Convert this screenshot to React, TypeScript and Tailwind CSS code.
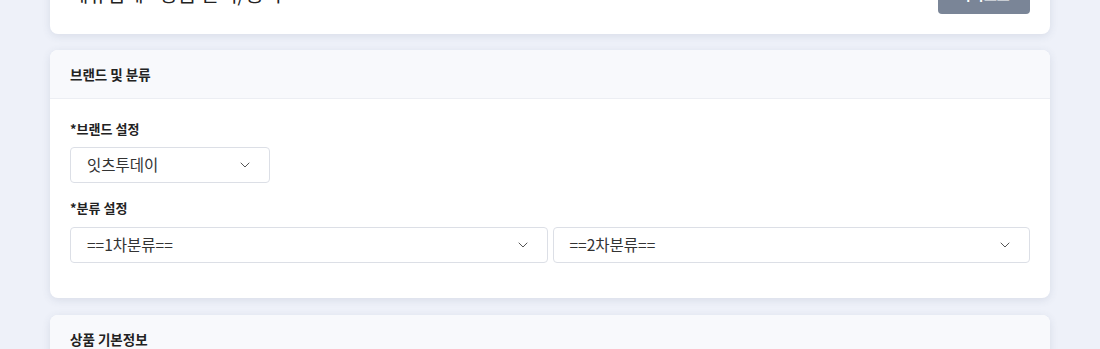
import { ChevronDown } from "lucide-react";

const font = { fontFamily: '"Noto Sans CJK KR", "Noto Sans", sans-serif' };

function Select({ value, className }: { value: string; className?: string }) {
  return (
    <div
      className={`flex h-9 items-center justify-between rounded border border-[#dcdfe6] bg-white pl-4 pr-4 text-[15.5px] text-[#333] ${className ?? ""}`}
    >
      <span>{value}</span>
      <ChevronDown className="h-4 w-4 text-[#555]" strokeWidth={1.5} />
    </div>
  );
}

function Card({ title, className, children }: { title: string; className?: string; children?: React.ReactNode }) {
  return (
    <section className={`overflow-hidden rounded-lg bg-white shadow-[0_2px_8px_rgba(60,70,110,0.12)] ${className ?? ""}`}>
      <header className="flex h-[49px] items-center border-b border-[#eceef3] bg-[#f8f9fc] px-5 text-[13.5px] font-bold text-[#222]">
        {title}
      </header>
      {children}
    </section>
  );
}

export default function App() {
  return (
    <div className="min-h-[349px] overflow-hidden bg-[#eef1f9]" style={font}>
      <div className="flex flex-col gap-4 px-[50px] -mt-[46px]">
        <div className="flex h-20 items-center justify-between rounded-lg bg-white px-5 shadow-[0_2px_8px_rgba(60,70,110,0.12)]">
          <h1 className="text-xl text-[#222]">제휴업체 - 상품 관리/등록</h1>
          <button className="flex h-10 w-[92px] items-center justify-center rounded bg-[#7a8597] text-sm font-bold text-white">
            목록으로
          </button>
        </div>

        <Card title="브랜드 및 분류">
          <div className="px-5 pb-[35px] pt-5">
            <div className="text-[13px] font-bold text-[#222]">*브랜드 설정</div>
            <Select value="잇츠투데이" className="mt-2 w-[200px]" />
            <div className="mt-[15px] text-[13px] font-bold text-[#222]">*분류 설정</div>
            <div className="mt-[10px] grid grid-cols-2 gap-[5px]">
              <Select value="==1차분류==" />
              <Select value="==2차분류==" />
            </div>
          </div>
        </Card>

        <Card title="상품 기본정보" className="mt-px">
          <div className="h-40" />
        </Card>
      </div>
    </div>
  );
}
